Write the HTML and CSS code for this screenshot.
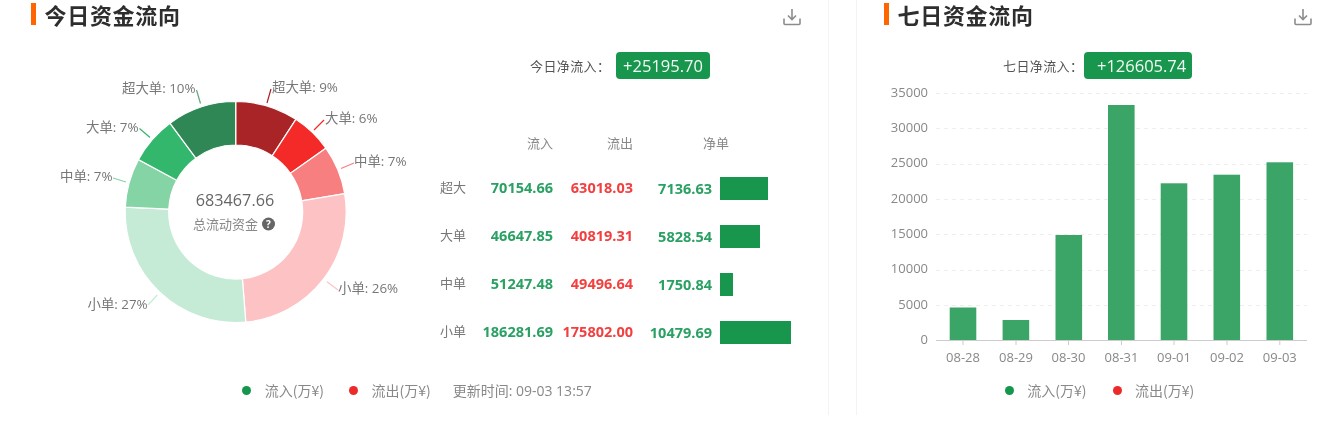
FILE: index.html
```html
<!DOCTYPE html>
<html lang="zh-CN">
<head>
<meta charset="utf-8">
<title>资金流向</title>
<link rel="stylesheet" href="styles.css">
</head>
<body>
<main class="page">
  <section class="panel panel-today">
    <header class="panel-head">
      <h2 class="panel-title">今日资金流向</h2>
      <svg class="download" viewBox="0 0 18 18"><path d="M9 1v10M5 7.500 9 11.500l4-4M1 10.500v5q0 1 1 1h14q1 0 1-1v-5" fill="none" stroke="#8c8c8c" stroke-width="1.600"/></svg>
    </header>
    <div class="today-body">
      <svg class="donut" width="430" height="346" viewBox="0 32 430 346">
        <g stroke="#fff" stroke-width="1.200">
          <path fill="#a92426" d="M235.700 101.500A110.500 110.500 0 0 1 295.880 119.320L272.190 155.810A67 67 0 0 0 235.700 145Z"/>
          <path fill="#f32a27" d="M295.880 119.320A110.500 110.500 0 0 1 325.880 148.140L290.380 173.280A67 67 0 0 0 272.190 155.810Z"/>
          <path fill="#f87f80" d="M325.880 148.140A110.500 110.500 0 0 1 344.650 193.570L301.760 200.820A67 67 0 0 0 290.380 173.280Z"/>
          <path fill="#fdc3c4" d="M344.650 193.570A110.500 110.500 0 0 1 245.800 322.100L242.400 278.700A67 67 0 0 0 301.760 200.820Z"/>
          <path fill="#c5ebd6" d="M245.800 322.100A110.500 110.500 0 0 1 125.310 207.180L168.770 209.080A67 67 0 0 0 242.400 278.700Z"/>
          <path fill="#85d4a5" d="M125.310 207.180A110.500 110.500 0 0 1 138.400 159.610L176.710 180.240A67 67 0 0 0 168.770 209.080Z"/>
          <path fill="#33b76c" d="M138.400 159.610A110.500 110.500 0 0 1 169.970 123.170L195.850 158.140A67 67 0 0 0 176.710 180.240Z"/>
          <path fill="#308756" d="M169.970 123.170A110.500 110.500 0 0 1 235.700 101.500L235.700 145A67 67 0 0 0 195.850 158.140Z"/>
        </g>
        <g fill="none" stroke-width="1.200">
          <path d="M196.500 90 200.500 103.500" stroke="#5da87e"/>
          <path d="M139.500 128.500 150 137.500" stroke="#33b76c"/>
          <path d="M113 178 126 182" stroke="#85d4a5"/>
          <path d="M148 305 157.300 295" stroke="#c5ebd6"/>
          <path d="M271 89 267 103" stroke="#a92426"/>
          <path d="M324 120 314 130" stroke="#f32a27"/>
          <path d="M354 163 341 168.500" stroke="#f87f80"/>
          <path d="M338 290 327 281.700" stroke="#fdc3c4"/>
        </g>
        <g class="pie-label">
          <text x="122" y="93">超大单: 10%</text>
          <text x="86" y="132">大单: 7%</text>
          <text x="60" y="181">中单: 7%</text>
          <text x="87.500" y="309">小单: 27%</text>
          <text x="272" y="92">超大单: 9%</text>
          <text x="325" y="123">大单: 6%</text>
          <text x="354" y="166">中单: 7%</text>
          <text x="338" y="293">小单: 26%</text>
        </g>
        <text class="pie-total" x="235" y="206">683467.66</text>
        <text class="pie-sub" x="193" y="229">总流动资金</text>
        <circle cx="268.500" cy="224" r="6.500" fill="#666"/>
        <text class="pie-help" x="268.500" y="228">?</text>
      </svg>
      <div class="today-side">
        <div class="net-row net-row-today">
          <span class="net-label">今日净流入：</span>
          <span class="net-pill">+25195.70</span>
        </div>
        <div class="flow-table">
          <div class="flow-row flow-head">
            <span></span><span class="num">流入</span><span class="num">流出</span><span class="net-title">净单</span>
          </div>
          <div class="flow-row">
            <span class="flow-name">超大</span><span class="num inflow">70154.66</span><span class="num outflow">63018.03</span><span class="num netv">7136.63</span><span class="net-bar bar-a"></span>
          </div>
          <div class="flow-row">
            <span class="flow-name">大单</span><span class="num inflow">46647.85</span><span class="num outflow">40819.31</span><span class="num netv">5828.54</span><span class="net-bar bar-b"></span>
          </div>
          <div class="flow-row">
            <span class="flow-name">中单</span><span class="num inflow">51247.48</span><span class="num outflow">49496.64</span><span class="num netv">1750.84</span><span class="net-bar bar-c"></span>
          </div>
          <div class="flow-row">
            <span class="flow-name">小单</span><span class="num inflow">186281.69</span><span class="num outflow">175802.00</span><span class="num netv">10479.69</span><span class="net-bar bar-d"></span>
          </div>
        </div>
      </div>
    </div>
    <footer class="legend legend-today">
      <span class="legend-item"><i class="dot dot-green"></i>流入(万¥)</span>
      <span class="legend-item"><i class="dot dot-red"></i>流出(万¥)</span>
      <span class="legend-time">更新时间: 09-03 13:57</span>
    </footer>
  </section>
  <section class="panel panel-week">
    <header class="panel-head">
      <h2 class="panel-title">七日资金流向</h2>
      <svg class="download" viewBox="0 0 18 18"><path d="M9 1v10M5 7.500 9 11.500l4-4M1 10.500v5q0 1 1 1h14q1 0 1-1v-5" fill="none" stroke="#8c8c8c" stroke-width="1.600"/></svg>
    </header>
    <div class="net-row net-row-week">
      <span class="net-label">七日净流入：</span>
      <span class="net-pill net-pill-week">+126605.74</span>
    </div>
    <svg class="bars" width="476" height="294" viewBox="857 84 476 294">
      <g stroke="#eee" stroke-dasharray="4 4">
        <path d="M936 93.500H1307"/><path d="M936 128.500H1307"/><path d="M936 164.500H1307"/><path d="M936 199.500H1307"/><path d="M936 234.500H1307"/><path d="M936 270.500H1307"/><path d="M936 305.500H1307"/>
      </g>
      <g fill="#3aa566">
        <rect x="949.700" y="307.500" width="26.600" height="33"/>
        <rect x="1002.600" y="320" width="26.600" height="20.500"/>
        <rect x="1055.500" y="235" width="26.600" height="105.500"/>
        <rect x="1108" y="105" width="26.600" height="235.500"/>
        <rect x="1160.700" y="183.300" width="26.600" height="157.200"/>
        <rect x="1213.500" y="174.700" width="26.600" height="165.800"/>
        <rect x="1266.500" y="162.300" width="26.600" height="178.200"/>
      </g>
      <path d="M936 340.500H1307M963 340v5M1016 340v5M1068.500 340v5M1121.500 340v5M1174 340v5M1227 340v5M1279.800 340v5" stroke="#ccc" fill="none"/>
      <g class="y-tick">
        <text x="928" y="96.500">35000</text>
        <text x="928" y="131.500">30000</text>
        <text x="928" y="167">25000</text>
        <text x="928" y="202.500">20000</text>
        <text x="928" y="238">15000</text>
        <text x="928" y="273">10000</text>
        <text x="928" y="308.500">5000</text>
        <text x="928" y="344">0</text>
      </g>
      <g class="x-tick">
        <text x="963" y="362">08-28</text>
        <text x="1016" y="362">08-29</text>
        <text x="1068.500" y="362">08-30</text>
        <text x="1121.500" y="362">08-31</text>
        <text x="1174" y="362">09-01</text>
        <text x="1227" y="362">09-02</text>
        <text x="1279.800" y="362">09-03</text>
      </g>
    </svg>
    <footer class="legend legend-week">
      <span class="legend-item"><i class="dot dot-green"></i>流入(万¥)</span>
      <span class="legend-item"><i class="dot dot-red"></i>流出(万¥)</span>
    </footer>
  </section>
</main>
</body>
</html>
```
FILE: styles.css
```css
* { box-sizing: border-box; }
html, body { margin: 0; background: #fff; overflow: hidden; }
body { font-family: "Open Sans", "Noto Sans CJK SC", sans-serif; color: #666; }
.page { display: flex; width: 1333px; height: 424px; gap: 27px; filter: blur(.3px); }
.panel { height: 415px; display: flex; flex-direction: column; }
.panel-today { width: 829px; border-right: 1px solid #f3f3f3; }
.panel-week { width: 477px; flex: 1; border-left: 1px solid #f3f3f3; }

.panel-head { height: 32px; display: flex; justify-content: space-between; padding-top: 3px; }
.panel-today .panel-head { padding-left: 31px; padding-right: 27px; }
.panel-week .panel-head { padding-left: 27px; padding-right: 21px; }
.panel-title {
  display: flex; gap: 9px; margin: 0;
  font: 600 22px/32px "Noto Sans CJK SC", sans-serif; letter-spacing: .7px; color: #2e2e2e;
  height: 32px; margin-top: -5px;
}
.panel-title::before { content: ""; flex: none; width: 4.500px; height: 22px; margin-top: 5px; background: #f60; }
.download { width: 18px; height: 18px; margin-top: 5px; }

.today-body { display: flex; height: 346px; }
.donut { flex: none; }
.pie-label text { font: 13.400px "Open Sans", "Noto Sans CJK SC", sans-serif; fill: #777; }
.pie-total { font: 16.200px "Open Sans", sans-serif; fill: #666; text-anchor: middle; }
.pie-sub { font: 13px "Noto Sans CJK SC", sans-serif; fill: #888; }
.pie-help { font: 700 10px "Open Sans", sans-serif; fill: #fff; text-anchor: middle; }

.today-side { padding: 20px 0 0 10px; width: 398px; }
.net-row { display: flex; align-items: center; font-size: 13px; }
.net-row-today { padding-left: 90px; gap: 12px; }
.net-row-week { padding-left: 146px; gap: 7px; height: 27px; margin-top: 20px; margin-bottom: 5px; }
.net-label { color: #555; font-family: "Noto Sans CJK SC", sans-serif; letter-spacing: .4px; width: 74px; white-space: nowrap; }
.net-pill {
  height: 27px; width: 94px; border-radius: 4px; background: #18964d; color: #f2fbf5;
  font-size: 16.500px; line-height: 27px; text-align: center;
}
.net-pill-week { width: 108px; padding-left: 13px; text-align: left; }

.flow-table { margin-top: 42px; }
.flow-row {
  display: grid; grid-template-columns: 30px 83px 80px 79px 8px 80px; align-items: center; height: 48px;
  font-size: 14.500px;
}
.flow-head { height: 43.500px; font: 13px "Noto Sans CJK SC", sans-serif; color: #888; align-items: start; padding-top: 12px; }
.flow-name { font: 13px "Noto Sans CJK SC", sans-serif; color: #777; margin-top: -5px; }
.num { text-align: right; white-space: nowrap; }
.net-title { grid-column: 4 / 7; padding-left: 70px; }
.inflow, .outflow { font-weight: 700; margin-top: -3px; }
.inflow { color: #2aa163; }
.outflow { color: #f23f3f; }
.netv { font-weight: 700; color: #2aa163; grid-column: 4; }
.net-bar { grid-column: 6; height: 23px; background: #18964d; }
.bar-a { width: 48px; }
.bar-b { width: 40px; }
.bar-c { width: 13px; }
.bar-d { width: 71px; }

.legend { display: flex; justify-content: center; align-items: center; height: 24px; font-size: 14px; color: #888; }
.legend-today { padding-left: 6px; gap: 22px; }
.legend-today .legend-item + .legend-item { margin-left: 3px; }
.legend-item { display: flex; align-items: center; gap: 13.500px; font-family: "Noto Sans CJK SC", sans-serif; }
.legend-time { font-family: "Open Sans", "Noto Sans CJK SC", sans-serif; }
.dot { width: 9px; height: 9px; border-radius: 50%; }
.dot-green { background: #14964c; }
.dot-red { background: #ec2a2a; }
.legend-week { padding-left: 9px; gap: 26px; }

.bars { display: block; flex: none; }
.y-tick text { font: 13px "Open Sans", sans-serif; fill: #888; text-anchor: end; }
.x-tick text { font: 13px "Open Sans", sans-serif; fill: #888; text-anchor: middle; }
```
